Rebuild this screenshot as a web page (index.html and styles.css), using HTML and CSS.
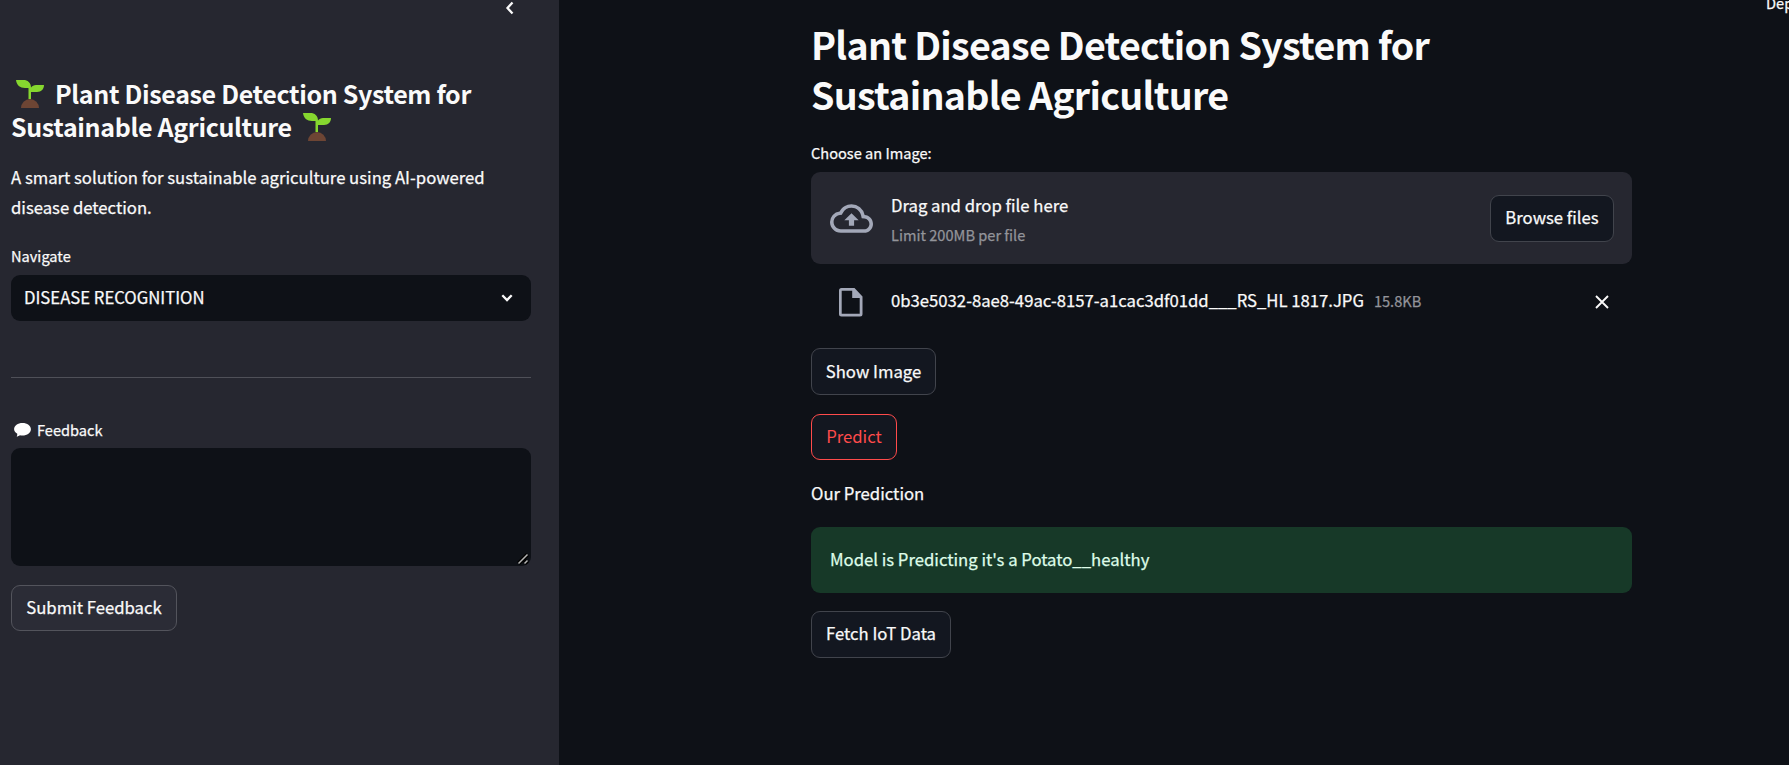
FILE: index.html
```html
<!DOCTYPE html>
<html lang="en">
<head>
<meta charset="utf-8">
<title>Plant Disease Detection</title>
<link rel="stylesheet" href="styles.css">
</head>
<body>
<svg width="0" height="0" class="defs">
  <symbol id="seedling" viewBox="0 0 28 28">
    <path fill="#6d4534" d="M5 28a9 9 0 0 1 18 0z"/>
    <path fill="#86d72f" d="M0 0h7.500c4 0 7.500 2.500 7.500 7.500 1-1.500 3-2.500 5-2.500h8c0 4-2.500 7-7 7h-6v7h-2.500V8H9C4 8 .5 5 0 0z"/>
  </symbol>
</svg>
<div class="app">
  <aside class="sidebar">
    <svg class="collapse" viewBox="0 0 8 14"><path d="M6.500 1.500L1.500 7l5 5.500"/></svg>
    <h1 class="side-title"><svg class="sprout first"><use href="#seedling"/></svg><span>Plant Disease Detection System for</span><br><span>Sustainable Agriculture</span><svg class="sprout last"><use href="#seedling"/></svg></h1>
    <p class="intro">A smart solution for sustainable agriculture using AI-powered<br>disease detection.</p>
    <label class="label">Navigate</label>
    <div class="select"><span>DISEASE RECOGNITION</span><svg class="chevron" viewBox="0 0 12 8"><path d="M1.300 1.300L6 6l4.700-4.700"/></svg></div>
    <hr class="rule">
    <label class="label feedback"><svg class="bubble" viewBox="0 0 18 15"><path d="M9 0c5 0 9 2.900 9 6.700s-4 6.700-9 6.700c-1 0-2-.1-2.800-.4C5.300 13.700 4 14.300 2.800 14.400c.5-.8.700-1.900.6-2.900C1.300 10.300 0 8.600 0 6.700 0 2.900 4 0 9 0z"/></svg>Feedback</label>
    <div class="textarea"><svg class="grip" viewBox="0 0 12 12"><path class="grip-shade" d="M1.500 10.500l9-9M7.500 10.500l3-3"/><path d="M1.500 10.500l9-9M7.500 10.500l3-3"/></svg></div>
    <button class="btn submit">Submit Feedback</button>
  </aside>
  <main class="main">
    <span class="deploy">Deploy</span>
    <section class="content">
      <h1 class="title">Plant Disease Detection System for<br>Sustainable Agriculture</h1>
      <label class="label choose">Choose an Image:</label>
      <div class="dropzone">
        <svg class="cloud" viewBox="0 0 24 24"><path d="M19.350 10.040A7.490 7.490 0 0 0 12 4C9.110 4 6.600 5.640 5.350 8.040A5.994 5.994 0 0 0 0 14c0 3.310 2.690 6 6 6h13c2.760 0 5-2.240 5-5 0-2.640-2.050-4.780-4.650-4.960zM19 18H6c-2.210 0-4-1.790-4-4 0-2.050 1.530-3.760 3.560-3.970l1.070-.11.5-.95A5.469 5.469 0 0 1 12 6c2.620 0 4.880 1.860 5.390 4.430l.3 1.500 1.530.11A2.980 2.980 0 0 1 22 15c0 1.650-1.350 3-3 3zM8 13h2.550v3h2.900v-3H16l-4-4z"/></svg>
        <div class="drop-text"><div class="drop-main">Drag and drop file here</div><div class="small limit">Limit 200MB per file</div></div>
        <button class="btn browse">Browse files</button>
      </div>
      <div class="file">
        <svg class="doc" viewBox="0 0 24 29"><path fill-rule="evenodd" d="M2.500 0h13L23.500 8.500V26a2.500 2.500 0 0 1-2.500 2.500H2.500A2.500 2.500 0 0 1 0 26V2.500A2.500 2.500 0 0 1 2.500 0zM2.700 2.700v23.100h18V10h-7.500V2.700z"/></svg>
        <span class="name">0b3e5032-8ae8-49ac-8157-a1cac3df01dd___RS_HL 1817.JPG</span><span class="small size">15.8KB</span>
        <svg class="close" viewBox="0 0 14 14"><path d="M1 1l12 12M13 1L1 13"/></svg>
      </div>
      <button class="btn show">Show Image</button>
      <button class="btn predict">Predict</button>
      <p class="our">Our Prediction</p>
      <div class="success">Model is Predicting it's a Potato__healthy</div>
      <button class="btn fetch">Fetch IoT Data</button>
    </section>
  </main>
</div>
</body>
</html>
```

FILE: styles.css
```css
* { box-sizing: border-box; }
body {
  margin: 0;
  background: #0e1117;
  color: #fafafa;
  font-family: "Noto Sans CJK SC", "Noto Sans", sans-serif;
  font-size: 16.7px;
  line-height: 29.7px;
  -webkit-text-stroke: 0.25px;
}
h1, p { margin: 0; white-space: nowrap; }
h1 { -webkit-text-stroke: 0; }
svg { display: block; flex: none; }
.defs { position: absolute; }
.app { display: flex; width: 1789px; height: 765px; overflow: hidden; }
.sidebar { position: relative; width: 559px; padding: 77px 28px 0 11px; background: #262730; flex: none; }
.collapse { position: absolute; left: 505px; top: 1px; width: 10px; height: 14px; fill: none; stroke: #fafafa; stroke-width: 2.3; }
.side-title { font-size: 25px; line-height: 33.4px; font-weight: 700; letter-spacing: -0.34px; }
.sprout { display: inline-block; width: 28px; height: 28px; vertical-align: -4px; }
.first { margin: -8px 11px 0 5px; }
.last { margin: -8px 0 0 11px; }
.intro { margin-top: 19px; }
.label { display: flex; align-items: center; height: 24px; font-size: 14.6px; line-height: 24px; margin-top: 22px; white-space: nowrap; }
.select { display: flex; align-items: center; justify-content: space-between; height: 46px; margin-top: 7px; padding: 0 18px 0 13px; border-radius: 9px; background: #0e1117; white-space: nowrap; }
.chevron { width: 12px; height: 8px; fill: none; stroke: #fafafa; stroke-width: 2.3; }
.rule { height: 1px; margin: 56px 0 0; border: 0; background: #4f5058; }
.feedback { margin-top: 40px; }
.bubble { width: 17px; height: 14px; margin: 0 6px 0 3px; fill: #fff; }
.textarea { display: flex; align-items: flex-end; justify-content: flex-end; height: 118px; margin-top: 6px; padding: 1px 2px; border-radius: 9px; background: #0e1117; }
.grip { width: 12px; height: 12px; fill: none; stroke: #b5b5b5; stroke-width: 1.5; overflow: visible; }
.grip-shade { stroke: #000; stroke-width: 4; }
.btn { display: flex; align-items: center; justify-content: center; height: 47px; padding: 0; border: 1px solid #41444c; border-radius: 9px; background: #131720; color: #fafafa; font: inherit; white-space: nowrap; }
.submit { width: 166px; height: 46px; margin-top: 19px; background: #2b2c36; border-color: #53545c; }
.main { position: relative; flex: 1; }
.deploy { position: absolute; left: 1207px; top: -9px; font-size: 14.6px; line-height: 24px; }
.content { width: 821px; margin-left: 252px; padding-top: 19px; }
.title { font-size: 37.6px; line-height: 50px; font-weight: 700; letter-spacing: -0.72px; }
.dropzone { display: flex; align-items: center; height: 92px; margin-top: 7px; padding: 0 18px 0 19px; border-radius: 9px; background: #262730; }
.cloud { width: 43px; height: 43px; fill: #a3a8b8; }
.drop-text { flex: 1; margin-left: 18px; padding-top: 2px; }
.small { font-size: 14.6px; line-height: 24px; color: #93949a; }
.limit { margin-top: 2px; }
.browse { width: 124px; }
.file { display: flex; align-items: center; height: 56px; margin-top: 10px; padding: 0 23px 0 28px; white-space: nowrap; }
.doc { width: 24px; height: 29px; fill: #a3a8b8; }
.name { margin-left: 28px; padding-bottom: 3px; }
.size { margin-left: 10px; padding-bottom: 3px; }
.close { width: 14px; height: 14px; margin-left: auto; fill: none; stroke: #fafafa; stroke-width: 1.9; }
.show { width: 125px; margin-top: 18px; }
.predict { width: 86px; height: 46px; margin-top: 19px; color: #ff4b4b; border-color: #ff4b4b; -webkit-text-stroke: 0; }
.our { margin-top: 19px; }
.success { height: 66px; margin-top: 18px; padding: 18px 19px; border-radius: 9px; background: #173928; color: #dffde9; }
.fetch { width: 140px; margin-top: 18px; }
```
